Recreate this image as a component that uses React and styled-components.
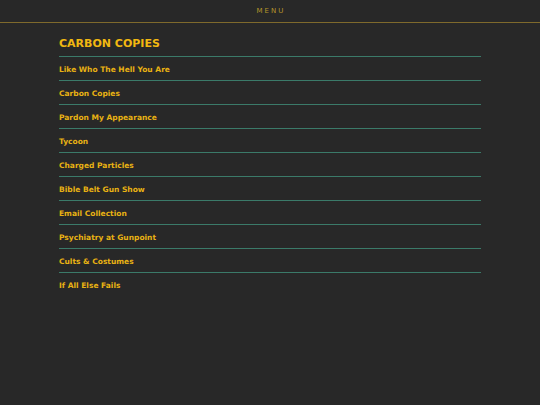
import React from "react";
import styled, { createGlobalStyle } from "styled-components";

const GlobalStyle = createGlobalStyle`
	html, body {
		margin: 0;
		padding: 0;
		background: #282828;
		font-family: "DejaVu Sans", Verdana, sans-serif;
	}
`;

const Page = styled.div`
	min-height: 405px;
	background: #282828;
`;

const Header = styled.header`
	height: 22px;
	border-bottom: 1px solid #7f6a2c;
	display: flex;
	align-items: center;
	justify-content: center;
`;

const MenuButton = styled.span`
	font-size: 7px;
	letter-spacing: 2px;
	color: #b6952a;
	padding-left: 2px;
`;

const Content = styled.main`
	width: 422px;
	margin: 0 auto;
	padding-top: 13px;
`;

const Title = styled.h1`
	margin: 0;
	font-size: 11px;
	font-weight: bold;
	color: #f2b811;
	height: 20px;
	line-height: 16px;
	border-bottom: 1px solid #3b7a69;
`;

const TrackList = styled.ul`
	list-style: none;
	margin: 0;
	padding: 0;
`;

const Track = styled.li`
	height: 23px;
	line-height: 25px;
	font-size: 7.5px;
	font-weight: bold;
	color: #e8b213;
	border-bottom: ${(p) => (p.$last ? "none" : "1px solid #3b7a69")};
`;

const tracks = [
	"Like Who The Hell You Are",
	"Carbon Copies",
	"Pardon My Appearance",
	"Tycoon",
	"Charged Particles",
	"Bible Belt Gun Show",
	"Email Collection",
	"Psychiatry at Gunpoint",
	"Cults & Costumes",
	"If All Else Fails",
];

const App = () => {
	return (
		<Page>
			<GlobalStyle />
			<Header>
				<MenuButton>MENU</MenuButton>
			</Header>
			<Content>
				<Title>CARBON COPIES</Title>
				<TrackList>
					{tracks.map((t, i) => (
						<Track key={t} $last={i === tracks.length - 1}>
							{t}
						</Track>
					))}
				</TrackList>
			</Content>
		</Page>
	);
};

export default App;
